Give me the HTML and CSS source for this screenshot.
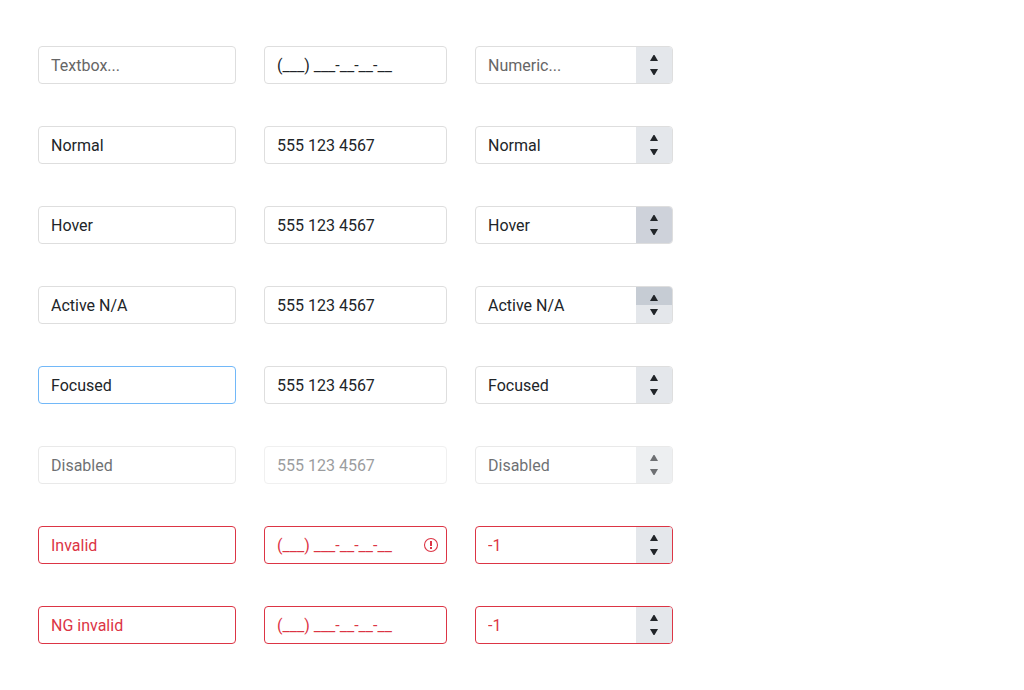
FILE: index.html
```html
<!DOCTYPE html>
<html lang="en">
<head>
<meta charset="utf-8">
<title>Input states</title>
<link rel="stylesheet" href="styles.css">
</head>
<body>
<main class="states" id="states"></main>
<script src="states.js"></script>
</body>
</html>
```
FILE: states.js
```js
const MASK = "(___) ___-__-__-__";
const PHONE = "555 123 4567";
const rows = [
  { name: "Textbox", state: "normal", placeholder: true, text: "Textbox...", phone: MASK, number: "Numeric..." },
  { name: "Normal", state: "normal", text: "Normal", phone: PHONE, number: "Normal" },
  { name: "Hover", state: "hover", text: "Hover", phone: PHONE, number: "Hover" },
  { name: "Active", state: "active", text: "Active N/A", phone: PHONE, number: "Active N/A" },
  { name: "Focused", state: "focused", text: "Focused", phone: PHONE, number: "Focused" },
  { name: "Disabled", state: "disabled", text: "Disabled", phone: PHONE, number: "Disabled" },
  { name: "Invalid", state: "invalid", text: "Invalid", phone: MASK, number: "-1", icon: true },
  { name: "NG invalid", state: "invalid", text: "NG invalid", phone: MASK, number: "-1" }
];

const warning = '<svg class="warning" viewBox="0 0 16 16" aria-hidden="true"><circle cx="8" cy="8" r="6.5" fill="none" stroke="currentColor" stroke-width="1.1"/><path d="M7 4h2v5H7zM7 10h2v2H7z" fill="currentColor"/></svg>';

function input(label, value, row, hint) {
  const content = hint ? `placeholder="${value}"` : `value="${value}"`;
  return `<input class="value" type="text" aria-label="${label}" ${content}${row.state === "disabled" ? " disabled" : ""}>`;
}

function spin(label, direction, row) {
  const d = direction === "up" ? "M4 8 7.5 2h1L12 8Z" : "M4 4h8L8.5 10h-1Z";
  return `<button class="spin spin-${direction}" type="button" aria-label="${label}"${row.state === "disabled" ? " disabled" : ""}><svg class="arrow" viewBox="0 0 16 12" aria-hidden="true"><path d="${d}" fill="currentColor"/></svg></button>`;
}

document.getElementById("states").innerHTML = rows.map(row => `
  <div class="row ${row.state}">
    <div class="field textbox">${input(row.name + " text", row.text, row, row.placeholder)}</div>
    <div class="field masked">${input(row.name + " phone", row.phone, row)}${row.icon ? warning : ""}</div>
    <div class="field numeric">${input(row.name + " number", row.number, row, row.placeholder)}
      <div class="spinner">${spin("Increase", "up", row)}${spin("Decrease", "down", row)}</div>
    </div>
  </div>`).join("");
```
FILE: styles.css
```css
* { box-sizing: border-box; }

body {
  margin: 0;
  background: #fff;
  color: #212529;
  font: 16px/24px Roboto, sans-serif;
}

.states {
  display: grid;
  gap: 42px;
  padding: 46px 38px;
}

.row {
  display: flex;
  gap: 28px;
}

.field {
  display: flex;
  align-items: center;
  min-width: 0;
  border: 1px solid #dedede;
  border-radius: 4px;
  background: #fff;
  overflow: hidden;
}

.textbox { flex: 0 1 198px; }
.masked { flex: 0 1 183px; }
.numeric { flex: 0 1 198px; }

.value {
  flex: 1;
  width: 100%;
  min-width: 0;
  padding: 7px 12px 5px;
  border: 0;
  outline: 0;
  background: transparent;
  color: inherit;
  font: inherit;
}

.value::placeholder { color: #666; opacity: 1; }

.spinner {
  display: flex;
  flex: none;
  flex-direction: column;
  align-self: stretch;
  width: 36px;
  background: #e4e7eb;
}

.spin {
  display: flex;
  flex: 1;
  justify-content: center;
  align-items: flex-start;
  padding: 0;
  border: 0;
  background: transparent;
  color: #212529;
}

.spin-up { align-items: flex-end; }
.arrow { width: 16px; height: 12px; }

.hover .spinner { background: #ced2da; }
.active .spin-up { background: #c6ccd4; }
.focused .textbox { border-color: #72b8f8; }
.disabled .field { opacity: 0.65; }
.disabled .masked { opacity: 0.45; }
.invalid .field { border-color: #dc3545; color: #dc3545; }

.warning {
  flex: none;
  width: 16px;
  height: 16px;
  margin-right: 7px;
}
```
